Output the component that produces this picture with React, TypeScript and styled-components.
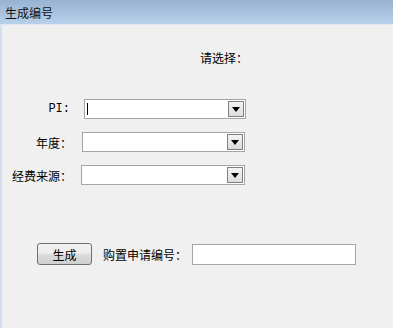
import React from "react";
import styled, { createGlobalStyle } from "styled-components";

const GlobalStyle = createGlobalStyle`
  html, body {
    margin: 0;
    padding: 0;
    background: #f0f0f0;
  }
  body {
    font-family: "Noto Sans CJK SC", "DejaVu Sans", sans-serif;
    font-size: 12px;
    color: #000;
  }
`;

const fields = [
  { label: "PI:", indent: 12, width: 162, caret: true },
  { label: "年度：", indent: 10, width: 163, caret: false },
  { label: "经费来源：", indent: 9, width: 164, caret: false },
];

const ComboBox = ({ indent, width, caret }: { indent: number; width: number; caret: boolean }) => {
  return (
    <Combo $indent={indent} $width={width}>
      <ComboText>{caret && <Caret />}</ComboText>
      <DropButton>
        <svg width="8" height="5" viewBox="0 0 8 5">
          <path d="M0 0h8L4 5z" fill="#000" />
        </svg>
      </DropButton>
    </Combo>
  );
};

const App = () => {
  return (
    <Window>
      <GlobalStyle />
      <TitleBar>生成编号</TitleBar>
      <Body>
        <Prompt>请选择：</Prompt>
        <Form>
          {fields.map((f) => (
            <FieldRow key={f.label}>
              <Label $latin={f.label === "PI:"}>{f.label}</Label>
              <ComboBox indent={f.indent} width={f.width} caret={f.caret} />
            </FieldRow>
          ))}
        </Form>
        <ActionRow>
          <Button>生成</Button>
          <ActionLabel>购置申请编号：</ActionLabel>
          <TextField />
        </ActionRow>
      </Body>
    </Window>
  );
};

const Window = styled.div`
  display: flex;
  flex-direction: column;
  width: 393px;
  height: 328px;
  overflow: hidden;
`;

const TitleBar = styled.div`
  height: 25px;
  display: flex;
  align-items: center;
  padding-left: 5px;
  font-size: 12px;
  color: #101010;
  background: linear-gradient(to bottom, #98b3d1 0%, #a7c1de 50%, #b9d1ea 100%);
  box-sizing: border-box;
  border-bottom: 1px solid #dfe8f2;
`;

const Body = styled.div`
  flex: 1;
  display: flex;
  flex-direction: column;
  background: #f0f0f0;
  border-left: 2px solid #d3dfec;
`;

const Prompt = styled.div`
  margin: 25px 0 0 198px;
  line-height: 16px;
  font-size: 12px;
`;

const Form = styled.div`
  display: flex;
  flex-direction: column;
  gap: 13px;
  margin-top: 33px;
`;

const FieldRow = styled.div`
  display: flex;
  align-items: center;
  height: 20px;
`;

const Label = styled.div<{ $latin?: boolean }>`
  width: 70px;
  text-align: right;
  font-family: ${(p) => (p.$latin ? `"Liberation Mono", monospace` : `"Noto Sans CJK SC", sans-serif`)};
  font-size: 12px;
  box-sizing: border-box;
  padding-right: ${(p) => (p.$latin ? "2px" : "0")};
`;

const Combo = styled.div<{ $indent: number; $width: number }>`
  display: flex;
  align-items: stretch;
  margin-left: ${(p) => p.$indent}px;
  width: ${(p) => p.$width}px;
  height: 20px;
  box-sizing: border-box;
  border: 1px solid #a5a5a5;
  background: #fff;
`;

const ComboText = styled.div`
  flex: 1;
  display: flex;
  align-items: center;
  padding-left: 2px;
`;

const Caret = styled.span`
  display: block;
  width: 1px;
  height: 12px;
  background: #000;
`;

const DropButton = styled.div`
  width: 16px;
  margin: 1px;
  box-sizing: border-box;
  border: 1px solid #7f7f7f;
  background: linear-gradient(to bottom, #f4f4f4, #dcdcdc);
  display: flex;
  align-items: center;
  justify-content: center;
`;

const ActionRow = styled.div`
  display: flex;
  align-items: center;
  margin-top: 58px;
  padding-left: 35px;
`;

const Button = styled.button`
  width: 55px;
  height: 22px;
  padding: 0;
  box-sizing: border-box;
  border: 1px solid #707070;
  border-radius: 3px;
  background: linear-gradient(to bottom, #f2f2f2 0%, #ebebeb 50%, #dddddd 51%, #cfcfcf 100%);
  font-family: "Noto Sans CJK SC", sans-serif;
  font-size: 12px;
  color: #000;
`;

const ActionLabel = styled.span`
  margin-left: 11px;
  font-size: 12px;
`;

const TextField = styled.div`
  margin-left: 5px;
  width: 164px;
  height: 21px;
  box-sizing: border-box;
  border: 1px solid #a5a5a5;
  background: #fff;
`;

export default App;
